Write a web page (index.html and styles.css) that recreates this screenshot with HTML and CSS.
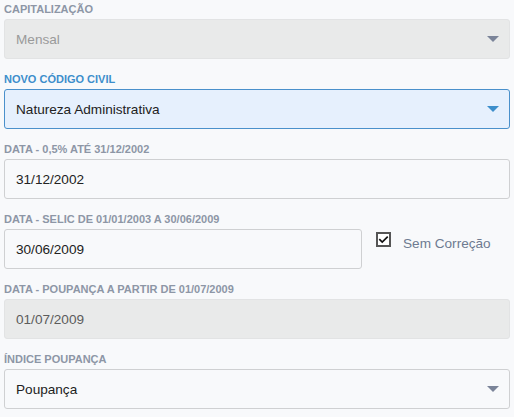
FILE: index.html
```html
<!DOCTYPE html>
<html lang="pt-BR">
<head>
<meta charset="utf-8">
<link rel="stylesheet" href="styles.css">
</head>
<body>
<div class="form">
  <div class="field">
    <div class="label">CAPITALIZAÇÃO</div>
    <div class="control select disabled"><span class="value">Mensal</span><span class="arrow"></span></div>
  </div>
  <div class="field">
    <div class="label active">NOVO CÓDIGO CIVIL</div>
    <div class="control select focused"><span class="value">Natureza Administrativa</span><span class="arrow"></span></div>
  </div>
  <div class="field">
    <div class="label">DATA - 0,5% ATÉ 31/12/2002</div>
    <div class="control"><span class="value">31/12/2002</span></div>
  </div>
  <div class="field">
    <div class="label">DATA - SELIC DE 01/01/2003 A 30/06/2009</div>
    <div class="row">
      <div class="control short"><span class="value">30/06/2009</span></div>
      <label class="check">
        <span class="box"><svg width="13" height="11" viewBox="0 0 13 11"><path d="M1.5 5 L5 8.5 L11.5 2" fill="none" stroke="#111" stroke-width="2"/></svg></span>
        <span class="check-text">Sem Correção</span>
      </label>
    </div>
  </div>
  <div class="field">
    <div class="label">DATA - POUPANÇA A PARTIR DE 01/07/2009</div>
    <div class="control disabled dark"><span class="value">01/07/2009</span></div>
  </div>
  <div class="field">
    <div class="label">ÍNDICE POUPANÇA</div>
    <div class="control select"><span class="value">Poupança</span><span class="arrow"></span></div>
  </div>
</div>
</body>
</html>
```
FILE: styles.css
```css
html, body {
  margin: 0;
  padding: 0;
  background: #f8f9fb;
}
body {
  font-family: "Liberation Sans", Arial, sans-serif;
}
.form {
  padding: 1px 4px 0 4px;
  display: flex;
  flex-direction: column;
  gap: 12px;
}
.field {
  display: flex;
  flex-direction: column;
}
.label {
  font-size: 11px;
  font-weight: bold;
  line-height: 16px;
  color: #8d96a6;
  margin-bottom: 2px;
  white-space: nowrap;
}
.label.active {
  color: #3d8ecb;
}
.control {
  box-sizing: border-box;
  height: 40px;
  border: 1px solid #cfd0d2;
  border-radius: 3px;
  background: #f8f9fb;
  display: flex;
  align-items: center;
  justify-content: space-between;
  padding: 0 10px 0 11px;
  font-size: 13.6px;
  color: #222;
}
.control.disabled {
  background: #e9eaea;
  border-color: #e2e3e4;
  color: #9a9a9a;
}
.control.disabled.dark {
  color: #5c5c5c;
}
.control.focused {
  background: #e6f0fd;
  border-color: #4a90cb;
}
.arrow {
  width: 0;
  height: 0;
  border-left: 6.5px solid transparent;
  border-right: 6.5px solid transparent;
  border-top: 6px solid #7b8499;
}
.focused .arrow {
  border-top-color: #3d8ecb;
}
.row {
  display: flex;
  align-items: flex-start;
}
.control.short {
  width: 358px;
}
.check {
  display: flex;
  align-items: flex-start;
  margin-left: 14px;
}
.box {
  box-sizing: border-box;
  width: 15px;
  height: 15px;
  margin-top: 3px;
  border: 2px solid #555;
  background: #fff;
  display: flex;
  align-items: center;
  justify-content: center;
}
.box svg {
  display: block;
}
.check-text {
  margin-left: 12px;
  margin-top: 7px;
  line-height: 16px;
  font-size: 13.6px;
  color: #6e7b91;
}
```
